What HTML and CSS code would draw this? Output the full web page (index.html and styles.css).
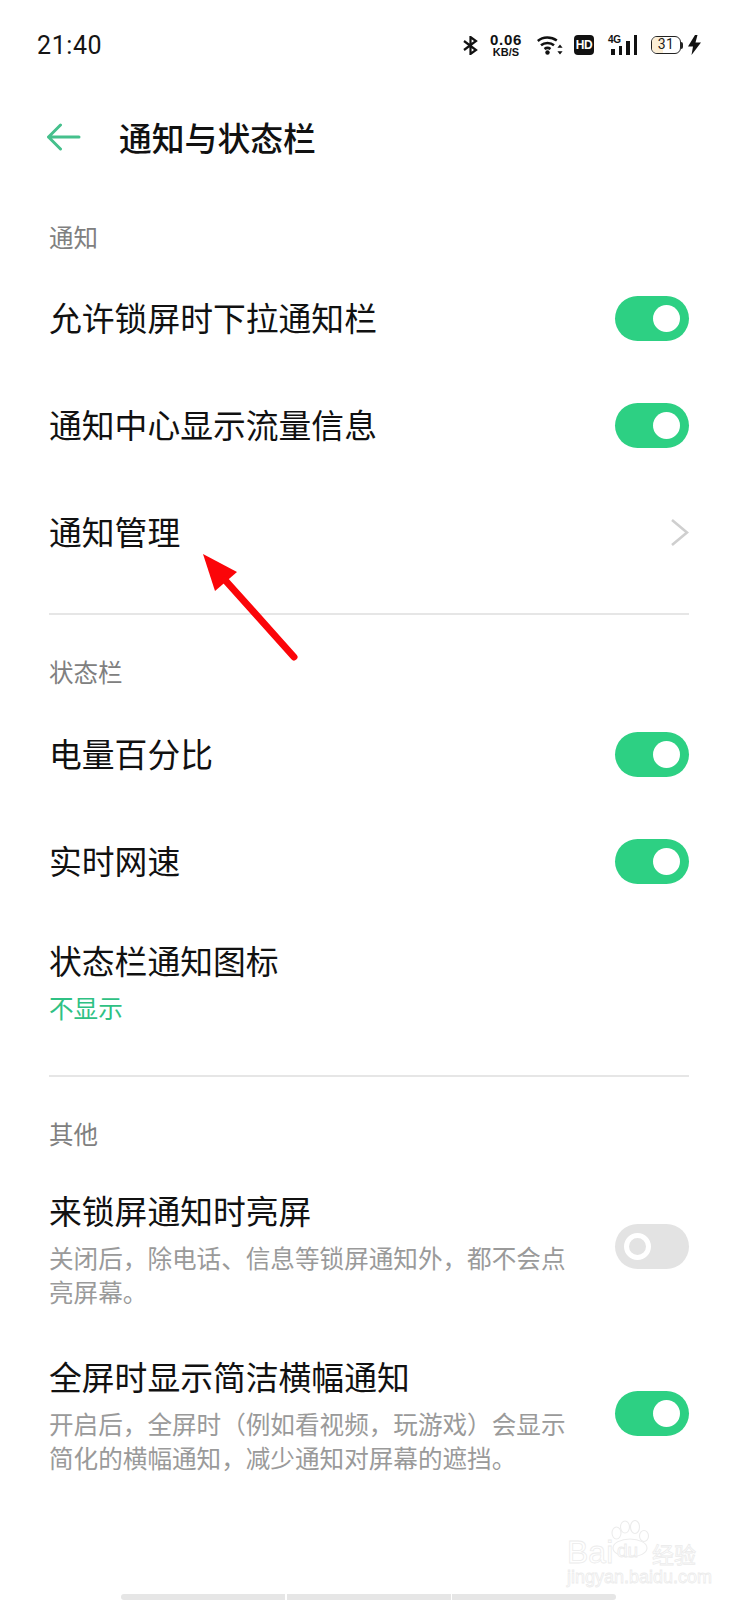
FILE: index.html
```html
<!DOCTYPE html>
<html lang="zh-CN">
<head>
<meta charset="utf-8">
<title>通知与状态栏</title>
<link rel="stylesheet" href="styles.css">
</head>
<body>
<div class="screen">
  <div class="status">
    <span class="time">21:40</span>
    <div class="status-icons">
      <svg class="ic-bt" width="15" height="19" viewBox="0 0 15 19"><path d="M1 5 13 14 7.500 18V1L13 5 1 14" fill="none" stroke="#111" stroke-width="2.200"/></svg>
      <div class="speed"><span class="speed-num">0.06</span><span class="speed-unit">KB/S</span></div>
      <svg class="ic-wifi" width="26" height="20" viewBox="0 0 26 20"><g fill="none" stroke="#111" stroke-width="2.500"><path d="M0.800 6C6 1.300 14 1.300 19.800 5.500"/><path d="M4 10.200c3.500-3 9.500-3 13 0"/><path d="M7.500 14c1.700-1.300 4.300-1.300 6 0"/></g><circle cx="10.500" cy="17.500" r="2.200" fill="#111"/><path d="M23 9.500l-2.600 3.200h5.200zM23 19.500l-2.600-3.200h5.200z" fill="#111"/></svg>
      <span class="hd">HD</span>
      <div class="signal">
        <span class="sig-label">4G</span>
        <i class="b1"></i><i class="b2"></i><i class="b3"></i><i class="b4"></i>
      </div>
      <div class="battery"><span class="batt-body"><span class="batt-fill"></span><span class="batt-num">31</span></span><span class="batt-tip"></span></div>
      <svg class="ic-bolt" width="13" height="20" viewBox="0 0 13 20"><path d="M7 0 0 11.500h5L3.500 20 13 7.500H7.500L9.500 0z" fill="#111"/></svg>
    </div>
  </div>

  <header class="head">
    <svg class="back" width="34" height="28" viewBox="0 0 34 28"><path d="M32 14H1.500M13.500 2 1.500 14l12 12" fill="none" stroke="#45c08c" stroke-width="3" stroke-linecap="round" stroke-linejoin="round"/></svg>
    <h1 class="title">通知与状态栏</h1>
  </header>

  <section class="group g1">
    <h2 class="label">通知</h2>
    <div class="row"><span class="name">允许锁屏时下拉通知栏</span><span class="sw on"></span></div>
    <div class="row"><span class="name">通知中心显示流量信息</span><span class="sw on"></span></div>
    <div class="row"><span class="name">通知管理</span><svg class="chev" width="19" height="29" viewBox="0 0 19 29"><path d="M2 2l15 12.500L2 27" fill="none" stroke="#cfcfcf" stroke-width="2.600"/></svg></div>
  </section>

  <section class="group g2">
    <h2 class="label">状态栏</h2>
    <div class="row"><span class="name">电量百分比</span><span class="sw on"></span></div>
    <div class="row"><span class="name">实时网速</span><span class="sw on"></span></div>
    <div class="row-tall"><div class="name">状态栏通知图标</div><div class="value">不显示</div></div>
  </section>

  <section class="group g3">
    <h2 class="label">其他</h2>
    <div class="row-desc first">
      <div class="desc-text"><div class="name">来锁屏通知时亮屏</div><p class="desc">关闭后，除电话、信息等锁屏通知外，都不会点亮屏幕。</p></div>
      <span class="sw off"></span>
    </div>
    <div class="row-desc">
      <div class="desc-text"><div class="name">全屏时显示简洁横幅通知</div><p class="desc">开启后，全屏时（例如看视频，玩游戏）会显示简化的横幅通知，减少通知对屏幕的遮挡。</p></div>
      <span class="sw on"></span>
    </div>
  </section>

  <svg class="red-arrow" width="100" height="112" viewBox="0 0 100 112"><path d="M3 4 37 22 15 41z" fill="#fb0509"/><path d="M25 30 94 107" stroke="#fb0509" stroke-width="7" stroke-linecap="round" fill="none"/></svg>

  <div class="mark">
    <svg class="paw" width="40" height="38" viewBox="0 0 40 38"><g fill="#fff" stroke="#ececec" stroke-width="1.100"><ellipse cx="5.500" cy="13" rx="4.500" ry="6"/><ellipse cx="14" cy="7" rx="4.500" ry="6"/><ellipse cx="24" cy="7" rx="4.500" ry="6.500"/><ellipse cx="33" cy="16" rx="4.500" ry="5.500"/><ellipse cx="19" cy="28" rx="17" ry="9"/></g></svg>
    <div class="mark-bai">Bai</div>
    <div class="mark-du">du</div>
    <div class="mark-cn">经验</div>
    <div class="mark-url">jingyan.baidu.com</div>
  </div>

  <div class="pill"><i></i><i></i><i></i></div>
</div>
</body>
</html>
```

FILE: styles.css
```css
* { box-sizing: border-box; }
html, body { margin: 0; padding: 0; background: #fff; }
body { font-family: "Noto Sans CJK SC", "Noto Sans", sans-serif; color: #111; }
.screen { position: relative; width: 738px; height: 1600px; overflow: hidden; background: #fff; }

.status { height: 90px; padding: 0 37px; display: flex; align-items: center; justify-content: space-between; }
.time { font-family: Roboto, sans-serif; font-size: 25px; letter-spacing: .6px; color: #151515; }
.status-icons { display: flex; align-items: center; }
.ic-bt { margin-right: 12px; }
.speed { width: 32px; display: flex; flex-direction: column; align-items: center; margin-right: 15px; font-family: "Liberation Sans", sans-serif; font-weight: 700; color: #111; }
.speed-num { font-size: 15px; line-height: 14px; letter-spacing: .7px; }
.speed-unit { font-size: 11px; line-height: 11px; }
.ic-wifi { margin-right: 11px; }
.hd { width: 20px; height: 20px; border-radius: 4px; background: #111; color: #fff; font: 700 12px/20px "Liberation Sans", sans-serif; text-align: center; letter-spacing: -.5px; margin-right: 14px; }
.signal { position: relative; width: 29px; height: 20px; display: flex; align-items: flex-end; justify-content: flex-end; gap: 4px; margin-right: 14px; }
.signal i { display: block; width: 3.500px; background: #111; }
.b1 { height: 6px; } .b2 { height: 9px; } .b3 { height: 14px; } .b4 { height: 20px; }
.sig-label { position: absolute; left: 0; top: 0; font: 700 10px/9px "Liberation Sans", sans-serif; letter-spacing: -.3px; }
.battery { display: flex; align-items: center; margin-right: 5px; }
.batt-body { position: relative; width: 30px; height: 18px; border: 1.800px solid #222; border-radius: 6px; display: block; overflow: hidden; }
.batt-fill { position: absolute; left: 0; top: 0; bottom: 0; width: 11px; background: #fbeed6; }
.batt-num { position: absolute; inset: 0; text-align: center; font: 400 14px/15px Roboto, sans-serif; letter-spacing: .5px; color: #222; }
.batt-tip { width: 2px; height: 7px; background: #222; border-radius: 0 2px 2px 0; }

.head { height: 94px; padding-left: 47px; display: flex; align-items: center; }
.back { margin-right: 38px; }
.title { margin: 0; font-size: 32.800px; font-weight: 500; color: #111; line-height: 46px; }

.group { padding: 0 49px; }
.label { margin: 0; font-size: 24.500px; font-weight: 400; line-height: 40px; color: #808080; }
.row { height: 107px; display: flex; align-items: center; justify-content: space-between; }
.name { font-size: 32.800px; font-weight: 400; line-height: 46px; color: #111; }
.g1 { padding-top: 33px; padding-bottom: 27px; }
.g1 .label { margin-bottom: 8px; }
.g1 .name { margin-bottom: 3px; }
.g2 { padding-top: 39px; }
.g2 .label { margin-bottom: 9px; }
.g2 .row .name { margin-bottom: 4px; }
.g3 { padding-top: 39px; }
.g2, .g3 { position: relative; }
.g2::before, .g3::before { content: ""; position: absolute; left: 49px; right: 49px; top: 0; height: 1.500px; background: #e6e6e6; }
.row-tall { padding-top: 22px; height: 160px; }
.value { font-size: 24.600px; line-height: 34px; color: #2fc184; margin-top: 7px; }
.row-desc { display: flex; align-items: center; justify-content: space-between; padding-top: 45px; }
.row-desc.first { padding-top: 33px; }
.desc-text { width: 520px; }
.desc { margin: 7px 0 0; font-size: 24.600px; line-height: 34px; color: #9a9a9a; }

.sw { position: relative; display: block; flex: none; width: 74px; height: 45px; border-radius: 23px; background: #2dd083; }
.sw::after { content: ""; position: absolute; top: 9px; right: 9px; width: 27px; height: 27px; border-radius: 50%; background: #fff; box-sizing: border-box; }
.sw.off { background: #e3e3e3; margin-bottom: 3px; }
.sw.off::after { right: auto; left: 9px; background: #e3e3e3; border: 5.500px solid #fff; }
.chev { flex: none; }

.red-arrow { position: absolute; left: 200px; top: 550px; }

.mark { position: absolute; left: 567px; top: 1518px; width: 135px; height: 70px; }
.paw { position: absolute; left: 44px; top: 2px; }
.mark-bai, .mark-du, .mark-cn, .mark-url { position: absolute; -webkit-text-stroke: .8px #ececec; color: #fff; white-space: nowrap; }
.mark-bai { left: 0; top: 18px; font: 400 32px/32px "Liberation Sans", sans-serif; }
.mark-du { left: 50px; top: 22px; font: 400 19px/22px "Liberation Sans", sans-serif; }
.mark-cn { left: 85px; top: 20px; font-size: 22px; line-height: 30px; }
.mark-url { left: 0; top: 49px; font: 400 18px/20px "Liberation Sans", sans-serif; }

.pill { position: absolute; left: 121px; top: 1594px; width: 495px; height: 6px; display: flex; gap: 1.500px; }
.pill i { flex: 1; background: #e6e6e6; }
.pill i:first-child { border-radius: 4px 0 0 4px; }
.pill i:last-child { border-radius: 0 4px 4px 0; }
```
